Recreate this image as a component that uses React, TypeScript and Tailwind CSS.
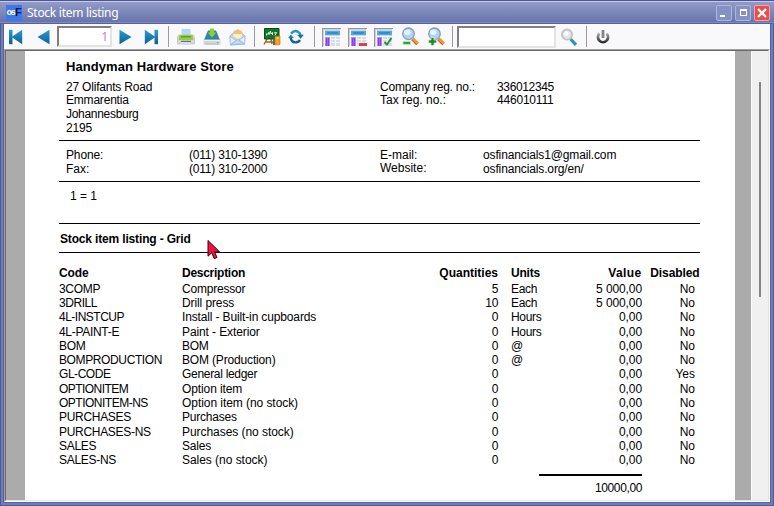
import React from "react";

type Item = { code: string; ct: string; desc: string; dt: string; qty: string; unit: string; value: string; off: string };

const items: Item[] = [
  { code: "3COMP", ct: "tracking-[-0.3px]", desc: "Compressor", dt: "tracking-[-0.2px]", qty: "5", unit: "Each", value: "5 000,00", off: "No" },
  { code: "3DRILL", ct: "tracking-[-0.45px]", desc: "Drill press", dt: "tracking-[-0.1px]", qty: "10", unit: "Each", value: "5 000,00", off: "No" },
  { code: "4L-INSTCUP", ct: "tracking-[-0.5px]", desc: "Install - Built-in cupboards", dt: "tracking-[-0.14px]", qty: "0", unit: "Hours", value: "0,00", off: "No" },
  { code: "4L-PAINT-E", ct: "tracking-[-0.3px]", desc: "Paint - Exterior", dt: "tracking-[-0.1px]", qty: "0", unit: "Hours", value: "0,00", off: "No" },
  { code: "BOM", ct: "tracking-[-0.3px]", desc: "BOM", dt: "tracking-[-0.3px]", qty: "0", unit: "@", value: "0,00", off: "No" },
  { code: "BOMPRODUCTION", ct: "tracking-[-0.38px]", desc: "BOM (Production)", dt: "tracking-[-0.16px]", qty: "0", unit: "@", value: "0,00", off: "No" },
  { code: "GL-CODE", ct: "tracking-[-0.45px]", desc: "General ledger", dt: "tracking-[-0.3px]", qty: "0", unit: "", value: "0,00", off: "Yes" },
  { code: "OPTIONITEM", ct: "tracking-[-0.55px]", desc: "Option item", dt: "tracking-[-0.1px]", qty: "0", unit: "", value: "0,00", off: "No" },
  { code: "OPTIONITEM-NS", ct: "tracking-[-0.5px]", desc: "Option item (no stock)", dt: "tracking-[-0.06px]", qty: "0", unit: "", value: "0,00", off: "No" },
  { code: "PURCHASES", ct: "tracking-[-0.3px]", desc: "Purchases", dt: "tracking-[-0.2px]", qty: "0", unit: "", value: "0,00", off: "No" },
  { code: "PURCHASES-NS", ct: "tracking-[-0.3px]", desc: "Purchases (no stock)", dt: "tracking-[-0.05px]", qty: "0", unit: "", value: "0,00", off: "No" },
  { code: "SALES", ct: "tracking-[-0.3px]", desc: "Sales", dt: "tracking-[-0.2px]", qty: "0", unit: "", value: "0,00", off: "No" },
  { code: "SALES-NS", ct: "tracking-[-0.3px]", desc: "Sales (no stock)", dt: "tracking-[-0.04px]", qty: "0", unit: "", value: "0,00", off: "No" },
];

const Sep = ({ className = "" }: { className?: string }) => (
  <div className={`h-[21px] w-px shrink-0 bg-[#9b9b9b] ${className}`} />
);

/* Media-style navigation arrow; the bar marks first / last */
const Nav = ({ flip = false, bar = false, className = "" }: { flip?: boolean; bar?: boolean; className?: string }) => (
  <svg className={`h-4 w-[14px] shrink-0 ${flip ? "-scale-x-100" : ""} ${className}`} viewBox="0 0 14 16">
    <defs>
      <linearGradient id="navBlue" x1="0" y1="0" x2="0" y2="1">
        <stop offset="0" stopColor="#2f9bcc" />
        <stop offset="1" stopColor="#0b609a" />
      </linearGradient>
    </defs>
    {bar && <path d="M0 0.8H3.5V15.2H0Z" fill="url(#navBlue)" />}
    <path d={bar ? "M13.2 0.8V15.2L2.5 8Z" : "M12.5 0.8V15.2L0.5 8Z"} fill="url(#navBlue)" />
  </svg>
);

const Printer = () => (
  <svg className="h-[18px] w-[18px] shrink-0" viewBox="0 0 18 18">
    <path d="M4.5 1H13.5V8H4.5Z" fill="#b5d7f7" />
    <path d="M1.5 7H16.5L17.5 10V16H.5V10Z" fill="#d7d7d9" stroke="#b6b6ba" strokeWidth=".6" />
    <path d="M2.5 7H15.5L16.5 12H1.5Z" fill="#96cf3c" />
    <path d="M4 8H14V9.5H4Z" fill="#5fa51e" />
    <path d="M4 12.8H14V14H4Z" fill="#6b6e72" />
    <path d="M4.5 14H13.5V17H4.5Z" fill="#c8e1fa" />
  </svg>
);

const Download = () => (
  <svg className="h-[18px] w-[18px] shrink-0" viewBox="0 0 18 18">
    <path d="M5 2.5H13L17 12H1Z" fill="#2f85a9" />
    <path d="M.5 11.5H17.5V16Q17.5 16.7 16.5 16.7H1.5Q.5 16.7 .5 16Z" fill="#d5d6d8" />
    <path d="M1 12H17V13H1Z" fill="#f0f0f0" />
    <path d="M2 15.5H16V16.5H2Z" fill="#b8b8bc" />
    <path d="M7 .5H11V4.5H13.3L9 9.5L4.7 4.5H7Z" fill="#8fd12d" />
    <path d="M14 14H15.5V15H14Z" fill="#6ebf31" />
  </svg>
);

const Mail = () => (
  <svg className="h-[18px] w-[17px] shrink-0" viewBox="0 0 17 18">
    <path d="M1 8L8.5 1.5L16 8L15.5 16L1.5 17Z" fill="#bcd8f4" stroke="#8dacdc" strokeWidth=".8" />
    <path d="M3.5 8L5 3.2Q9 1.2 12.5 3.2L14 9L8.5 11.5Z" fill="#fff1d2" stroke="#e9b96b" strokeWidth=".7" />
    <path d="M5 3.7Q9 1 12.7 3.7L13.3 6H4.3Z" fill="#efc07a" />
    <path d="M1 8.5L7 12.5L1.4 16.7ZM16 8L10 12L15.6 16Z" fill="#e3f1fe" stroke="#8bb4e4" strokeWidth=".6" />
    <path d="M1.5 16.8L8.5 11.3L15.5 16Z" fill="#bcd9f6" stroke="#92b2df" strokeWidth=".7" />
  </svg>
);

const Board = () => (
  <svg className="h-[19px] w-[18px] shrink-0" viewBox="0 0 18 19">
    <path d="M4 12L1 17.5M12 11V15M3 15H10M8 12L9 17" stroke="#a9611f" strokeWidth="1.4" />
    <path d="M1.5 1.5H16V12H1.5Z" fill="#137429" stroke="#0b4c1b" />
    <path d="M3.5 8.5V6.5M4.5 7.5L5.5 5.5L6 7.5L7.5 4L8 7L9.5 5.5V8M11 6L13.5 5.5L12 8.5" fill="none" stroke="#e6f5e7" strokeWidth="1" />
    <path d="M10 11.5H12V18H10Z" fill="#576579" />
    <path d="M12 9.5L17 9V17.5L12 18Z" fill="#f5a51c" stroke="#ba720b" strokeWidth=".6" />
    <path d="M13.5 11H15.5" stroke="#fff0b0" />
  </svg>
);

const Refresh = () => (
  <svg className="h-[16px] w-[16px] shrink-0" viewBox="0 0 16 16">
    <path d="M3 4.6Q7.5 -.6 12 4.5L12.6 6.5" fill="none" stroke="#2e91bf" strokeWidth="2.4" />
    <path d="M2.6 8.5Q3.5 13.8 8.3 13.3Q10.8 12.9 12 11" fill="none" stroke="#12618f" strokeWidth="2.4" />
    <path d="M9.2 5.8H15.8L12.6 9.8Z" fill="#17709f" />
    <path d="M0 9L2.8 5.6L6 9Z" fill="#2483b2" />
  </svg>
);

const Grid = ({ kind }: { kind: "plain" | "minus" | "check" }) => (
  <svg className="h-[19px] w-[19px] shrink-0" viewBox="0 0 19 19" shapeRendering="crispEdges">
    <path d="M0 0H19V19H0Z" fill="#f7f7f9" />
    <path d="M0 0H19V1H1V19H0Z" fill="#989898" />
    <path d="M1 1H18V2H2V18H1Z" fill="#d1d1d1" />
    <path d="M3 2H18V8H3Z" fill="#b5dcf0" />
    <path d="M3 3H18V7H3Z" fill="#52abd8" />
    <path d="M5 4H16V6H5Z" fill="#348fc5" />
    <path d="M3 9H8V18H3Z" fill="#b88af6" />
    <path d="M4 10H7V18H4Z" fill="#873de7" />
    <path d="M5 10H6V18H5Z" fill="#a663f7" />
    <path d="M9 9H18V18H9Z" fill="#d9dce3" />
    <path d="M9 11H18M9 14H18M13 9V18" stroke="#f5f6f9" />
    {kind === "minus" && <path d="M11 15H19V18H11Z" fill="#d7434b" />}
    {kind === "check" && (
      <path d="M10.5 14L13 16.5L17.5 10" fill="none" stroke="#249439" strokeWidth="2" shapeRendering="auto" />
    )}
  </svg>
);

const Magnifier = ({ plus = false }: { plus?: boolean }) => (
  <svg className="h-[19px] w-[18px] shrink-0" viewBox="0 0 18 19">
    <path d="M11.5 12L16.5 17" stroke="#b96422" strokeWidth="3.6" />
    <path d="M12 11.8L16.8 16.5" stroke="#ff9a27" strokeWidth="2.4" />
    <circle cx="7.5" cy="6.8" r="5.8" fill="#a9d4fb" stroke="#8d9bab" strokeWidth="1.3" />
    <ellipse cx="6.3" cy="5.2" rx="3.4" ry="2.8" fill="#e3f3ff" />
    {plus ? (
      <path d="M4 10.5H7V13H9.5V16H7V18.5H4V16H1.5V13H4Z" fill="#23842b" stroke="#d2edcf" strokeWidth=".8" />
    ) : (
      <path d="M2 14.5H9.5V17.5H2Z" fill="#3b9c43" stroke="#c2e6bf" strokeWidth=".8" />
    )}
  </svg>
);

const Find = () => (
  <svg className="h-[18px] w-[18px] shrink-0" viewBox="0 0 18 18">
    <path d="M10.5 11L16 16.8" stroke="#2e8fbc" strokeWidth="3.2" />
    <circle cx="7" cy="6.6" r="5.1" fill="#e6e6e8" stroke="#c4c4c7" strokeWidth="1.8" />
    <circle cx="6.2" cy="5.6" r="2.3" fill="#fcfcfd" />
  </svg>
);

const Power = () => (
  <svg className="h-[16px] w-[14px] shrink-0" viewBox="0 0 14 16">
    <defs>
      <linearGradient id="powerGray" x1="0" y1="0" x2="0" y2="1">
        <stop offset="0" stopColor="#a5a5a5" />
        <stop offset="1" stopColor="#303030" />
      </linearGradient>
    </defs>
    <path d="M3.4 4.6A5 5 0 1 0 10.6 4.6" fill="none" stroke="url(#powerGray)" strokeWidth="2.8" />
    <path d="M7 1V9" stroke="#858585" strokeWidth="2.8" />
  </svg>
);

const Cursor = () => (
  <svg className="absolute left-[207px] top-[239px] h-[21px] w-[14px]" viewBox="0 0 14 21">
    <path d="M1 1.5V17.2L4.7 13.8L7.3 19.7L10 18.4L7.5 12.8H12.6Z" fill="#f50f3c" stroke="#300a12" strokeWidth="1" />
  </svg>
);

const Pair = ({ label, value, w, vt }: { label: string; value: string; w: string; vt: string }) => (
  <div className="flex">
    <span className={w}>{label}</span>
    <span className={vt}>{value}</span>
  </div>
);

export default function App() {
  return (
    <div className="relative flex h-[506px] w-[774px] flex-col overflow-hidden bg-[#5f6ba6] font-['Liberation_Sans',Arial,sans-serif] text-[12px] text-black">
      <header className="flex h-6 shrink-0 items-center border-t border-[#4b5596] bg-[linear-gradient(to_bottom,#c5cbea_0,#c5cbea_1px,#929bc7_1px,#6874ac_21px,#7f8bbf_21px,#7f8bbf_22px,#5462a1_22px)] pl-[6px] pr-[4px]">
        <div className="flex h-4 w-4 items-center justify-center bg-[#3c78e9] font-bold leading-none">
          <span className="text-[9px] tracking-[-1px] text-white">os</span>
          <span className="text-[11px] text-[#071445]">F</span>
        </div>
        <span className="ml-[5px] font-['Noto_Sans',sans-serif] text-[12px] leading-[20px] tracking-[-0.27px] text-white">Stock item listing</span>
        <div className="ml-auto flex gap-[3px]">
          <div className="flex h-4 w-4 items-end rounded-[2px] border border-[#adb6dc] bg-[#8591c2] p-[3px]"><div className="h-[2px] w-[5px] bg-white" /></div>
          <div className="flex h-4 w-4 items-center justify-center rounded-[2px] border border-[#adb6dc] bg-[#8591c2]"><div className="h-[7px] w-[7px] border border-t-2 border-white" /></div>
          <div className="flex h-4 w-4 items-center justify-center rounded-[2px] border border-[#f8a4a4] bg-[#ee4b49]">
            <svg className="h-[10px] w-[10px]" viewBox="0 0 10 10"><path d="M1 1L9 9M9 1L1 9" stroke="white" strokeWidth="2.4" /></svg>
          </div>
        </div>
      </header>

      <div className="flex min-h-0 flex-1 border-x border-b border-[#4c5897]">
        <div className="flex flex-1 border-x-2 border-b-2 border-[#717db3]">
          <div className="flex flex-1 border-x border-b border-[#5462a1]">
            <div className="flex w-[766px] flex-col bg-[#f9f9fb]">
              <nav className="flex h-[25px] shrink-0 items-center pl-[5px]">
                <Nav bar />
                <Nav className="ml-[14px]" />
                <div className="ml-[6px] mr-[6px] flex h-[21px] w-[55px] items-center justify-end border-2 border-b-[#e3e3e3] border-l-[#808080] border-r-[#e3e3e3] border-t-[#808080] bg-white pr-[2px] font-['Noto_Sans',sans-serif] text-[12px] text-[#a98bd0]">1</div>
                <Nav flip />
                <Nav bar flip className="ml-[12px]" />
                <Sep className="ml-[10px] mr-[8px]" />
                <Printer />
                <div className="w-[8px]" />
                <Download />
                <div className="w-[8px]" />
                <Mail />
                <Sep className="ml-[8px] mr-[8px]" />
                <Board />
                <div className="w-[7px]" />
                <Refresh />
                <Sep className="ml-[10px] mr-[7px]" />
                <div className="flex gap-[7px] pt-[1px]">
                  <Grid kind="plain" /><Grid kind="minus" /><Grid kind="check" />
                </div>
                <div className="w-[8px]" />
                <Magnifier />
                <div className="w-[8px]" />
                <Magnifier plus />
                <Sep className="ml-[7px] mr-[4px]" />
                <div className="h-[22px] w-[99px] border-2 border-b-[#e3e3e3] border-l-[#808080] border-r-[#e3e3e3] border-t-[#808080] bg-white" />
                <div className="w-[4px]" />
                <Find />
                <Sep className="ml-[8px] mr-[9px]" />
                <Power />
              </nav>

              <div className="flex h-[453px] border border-b-white border-l-[#a0a0a0] border-r-white border-t-[#a0a0a0]">
                <div className="flex flex-1 border border-b-[#e3e3e3] border-l-[#696969] border-r-[#e3e3e3] border-t-[#696969] bg-[#ababab]">
                  <div className="w-[19px] shrink-0" />
                  <main className="flex w-[710px] shrink-0 flex-col bg-white pl-[34px]">
                    <div className="h-[89px] pl-[7px] pt-[7px]">
                      <h1 className="h-[22px] text-[13px] font-bold leading-[17px] tracking-[0.07px]">Handyman Hardware Store</h1>
                      <div className="flex">
                        <div className="w-[314px] pt-[0.75px] leading-[13.7px] tracking-[-0.2px]">
                          <div>27 Olifants Road</div><div>Emmarentia</div><div className="tracking-[-0.3px]">Johannesburg</div><div>2195</div>
                        </div>
                        <div className="pt-[1.3px] leading-[13px]">
                          <Pair label="Company reg. no.:" value="336012345" w="w-[117px] tracking-[-0.22px]" vt="tracking-[-0.35px]" />
                          <Pair label="Tax reg. no.:" value="446010111" w="w-[117px]" vt="tracking-[-0.2px]" />
                        </div>
                      </div>
                    </div>
                    <div className="flex h-[41px] w-[641px] border-t border-black pl-[7px] pt-[7px] leading-[14px]">
                      <div className="w-[314px]">
                        <Pair label="Phone:" value="(011) 310-1390" w="w-[123px] tracking-[-0.15px]" vt="tracking-[-0.22px]" />
                        <Pair label="Fax:" value="(011) 310-2000" w="w-[123px]" vt="tracking-[-0.22px]" />
                      </div>
                      <div className="w-[103px] pt-[0.6px] leading-[13px]">
                        <div>E-mail:</div>
                        <div>Website:</div>
                      </div>
                      <div className="tracking-[-0.13px]">
                        <div>osfinancials1@gmail.com</div>
                        <div>osfinancials.org/en/</div>
                      </div>
                    </div>
                    <div className="h-[42px] w-[641px] border-t border-black pl-[11px] pt-[7px] leading-[14px]">1 = 1</div>
                    <h2 className="h-[29px] w-[641px] border-t border-black pl-px pt-[8px] font-bold leading-[14px] tracking-[-0.16px]">Stock item listing - Grid</h2>
                    <div className="w-[641px] border-t border-black pt-[13px]">
                      <div className="flex h-[15.7px] font-bold leading-[14.25px]">
                        <span className="w-[123px] tracking-[-0.1px]">Code</span>
                        <span className="w-[216px] tracking-[-0.27px]">Description</span>
                        <span className="flex w-[100px] justify-end">Quantities</span>
                        <span className="w-[52px] pl-[13px] tracking-[-0.2px]">Units</span>
                        <span className="flex w-[91.5px] justify-end tracking-[0.4px]">Value</span>
                        <span className="flex w-[58px] justify-end tracking-[-0.1px]">Disabled</span>
                      </div>
                      {items.map((r) => (
                        <div key={r.code} className="flex h-[14.3px] leading-[14.3px]">
                          <span className={`w-[123px] ${r.ct}`}>{r.code}</span>
                          <span className={`w-[216px] ${r.dt}`}>{r.desc}</span>
                          <span className="flex w-[100.5px] justify-end">{r.qty}</span>
                          <span className="w-[51.5px] pl-[12.5px] tracking-[-0.3px]">{r.unit}</span>
                          <span className="flex w-[92px] justify-end tracking-[-0.1px]">{r.value}</span>
                          <span className="flex w-[53px] justify-end">{r.off}</span>
                        </div>
                      ))}
                    </div>
                    <div className="ml-[480px] mt-[6.15px] flex w-[103px] justify-end border-t-2 border-black pt-[5px] leading-[14px] tracking-[-0.38px]">10000,00</div>
                  </main>
                  <div className="w-4 shrink-0" />
                  <div className="flex flex-1 border-l border-white bg-[#f0f0f0] pl-[7px] pt-[31px]">
                    <div className="h-[215px] w-[2px] bg-[#858585]" />
                  </div>
                </div>
              </div>
            </div>
          </div>
        </div>
      </div>
      <Cursor />
    </div>
  );
}
